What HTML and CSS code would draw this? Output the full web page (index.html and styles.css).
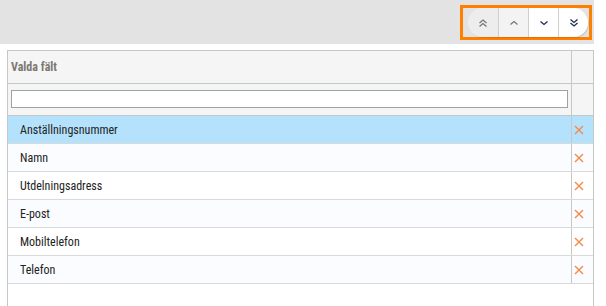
FILE: index.html
```html
<!DOCTYPE html>
<html lang="sv">
  <head>
    <meta charset="UTF-8" />
    <title>Valda fält</title>
    <link rel="stylesheet" href="styles.css">
  </head>
  <body>
    <div class="page">
      <div class="toolbar">
        <div class="highlight">
          <div class="btn-group">
            <button class="btn" disabled>
              <svg width="10" height="10" viewBox="0 0 10 10"><polyline points="1.5,5 5,2 8.5,5" /><polyline points="1.5,8.5 5,5.5 8.5,8.5" /></svg>
            </button>
            <button class="btn" disabled>
              <svg width="10" height="10" viewBox="0 0 10 10"><polyline points="1.5,6.5 5,3.5 8.5,6.5" /></svg>
            </button>
            <button class="btn active">
              <svg width="10" height="10" viewBox="0 0 10 10"><polyline points="1.5,3.5 5,6.5 8.5,3.5" /></svg>
            </button>
            <button class="btn active">
              <svg width="10" height="10" viewBox="0 0 10 10"><polyline points="1.5,1.5 5,4.5 8.5,1.5" /><polyline points="1.5,5 5,8 8.5,5" /></svg>
            </button>
          </div>
        </div>
      </div>

      <div class="grid">
        <div class="row head">
          <div class="cell name">Valda fält</div>
          <div class="cell del"></div>
        </div>
        <div class="row filter">
          <div class="cell name"><input type="text" class="filter-input" /></div>
          <div class="cell del"></div>
        </div>
        <div class="row selected">
          <div class="cell name">Anställningsnummer</div>
          <div class="cell del"><svg width="10" height="10" viewBox="0 0 10 10"><path d="M1 1L9 9M9 1L1 9" /></svg></div>
        </div>
        <div class="row alt">
          <div class="cell name">Namn</div>
          <div class="cell del"><svg width="10" height="10" viewBox="0 0 10 10"><path d="M1 1L9 9M9 1L1 9" /></svg></div>
        </div>
        <div class="row">
          <div class="cell name">Utdelningsadress</div>
          <div class="cell del"><svg width="10" height="10" viewBox="0 0 10 10"><path d="M1 1L9 9M9 1L1 9" /></svg></div>
        </div>
        <div class="row alt">
          <div class="cell name">E-post</div>
          <div class="cell del"><svg width="10" height="10" viewBox="0 0 10 10"><path d="M1 1L9 9M9 1L1 9" /></svg></div>
        </div>
        <div class="row">
          <div class="cell name">Mobiltelefon</div>
          <div class="cell del"><svg width="10" height="10" viewBox="0 0 10 10"><path d="M1 1L9 9M9 1L1 9" /></svg></div>
        </div>
        <div class="row alt">
          <div class="cell name">Telefon</div>
          <div class="cell del"><svg width="10" height="10" viewBox="0 0 10 10"><path d="M1 1L9 9M9 1L1 9" /></svg></div>
        </div>
      </div>
    </div>
  </body>
</html>
```

FILE: styles.css
```css
* {
  margin: 0;
  padding: 0;
  box-sizing: border-box;
}

body {
  font-family: Roboto, "Liberation Sans", sans-serif;
  font-size: 12px;
  font-stretch: 86%;
  color: #222;
  background: #fff;
  overflow: hidden;
}

.page {
  width: 594px;
}

.toolbar {
  height: 44px;
  background: #e3e3e3;
  display: flex;
  justify-content: flex-end;
  align-items: flex-start;
  padding: 5px 2px 0 0;
}

.highlight {
  border: 3px solid #ff7f00;
  padding: 0 1px 0 5px;
}

.btn-group {
  display: flex;
  height: 29px;
  border-radius: 15px;
  overflow: hidden;
  box-shadow: 1px 1px 1px rgba(0, 0, 0, 0.12);
}

.btn {
  width: 30px;
  height: 29px;
  border: none;
  border-left: 1px solid #cfcfcf;
  background: #f3f3f3;
  display: flex;
  align-items: center;
  justify-content: center;
}

.btn:first-child {
  border-left: none;
  background: #ededed;
}

.btn svg {
  fill: none;
  stroke: #777;
  stroke-width: 1.3;
}

.btn.active {
  background: #fff;
}

.btn.active svg {
  stroke: #1d2f55;
}

.grid {
  margin: 6px 0 0 7px;
  width: 587px;
  height: 260px;
  border: 1px solid #c6c8c8;
  border-bottom: none;
}

.row {
  display: flex;
  height: 28px;
  border-bottom: 1px solid #d8d9d9;
}

.row.head {
  height: 33px;
  background: #f4f5f4;
  border-bottom-color: #c6c8c8;
}

.row.filter {
  height: 32px;
  background: #f4f5f4;
  border-bottom-color: #c6c8c8;
}

.row.selected {
  background: #b4e2fc;
}

.row.alt {
  background: #fafcff;
}

.cell {
  display: flex;
  align-items: center;
}

.cell.name {
  flex: 1;
  padding-left: 12px;
}

.head .cell.name {
  padding-left: 3px;
  font-weight: bold;
  color: #7d7773;
}

.filter .cell.name {
  padding: 0 3px;
  align-items: flex-start;
}

.filter-input {
  margin-top: 6px;
  width: 557px;
  height: 18px;
  border: 1px solid #9aa4a4;
  background: #fff;
  outline: none;
}

.cell.del {
  width: 22px;
  border-left: 1px solid #c6c8c8;
  padding-left: 2px;
}

.cell.del svg {
  fill: none;
  stroke: #f5894a;
  stroke-width: 1.4;
}
```
